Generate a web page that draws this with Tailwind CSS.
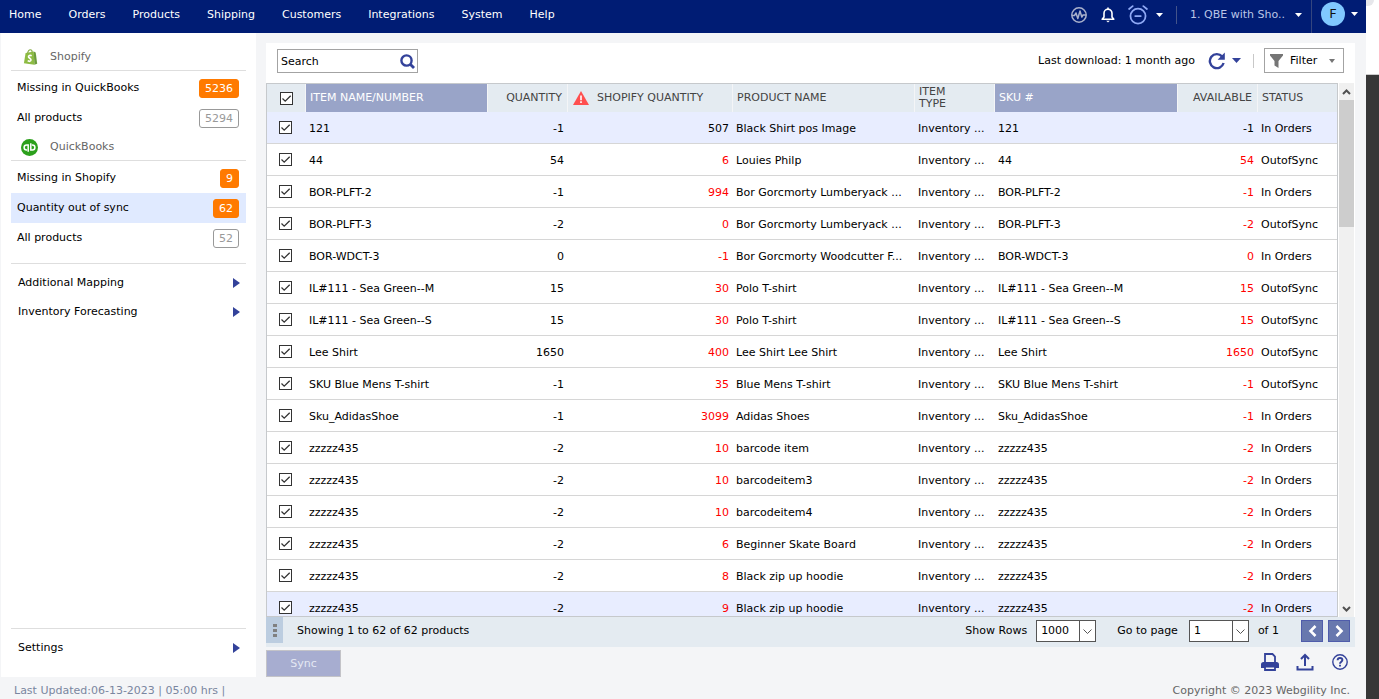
<!DOCTYPE html>
<html lang="en">
  <head>
    <meta charset="UTF-8" />
    <meta name="viewport" content="width=device-width, initial-scale=1.0" />
    <title>Products - Quantity out of sync</title>
    <script src="https://cdn.jsdelivr.net/npm/@tailwindcss/browser@4"></script>
  </head>

  <body class="flex h-screen overflow-hidden bg-[#f4f5f7] font-['Verdana','DejaVu_Sans',sans-serif] text-[11px] leading-4 text-black">
    <div class="flex min-w-0 flex-1 flex-col">
      <!-- top bar -->
      <header class="flex h-[33px] shrink-0 items-center justify-between bg-[#001c74] pl-[9px] pr-2 text-white">
        <nav class="flex gap-[27px] pb-1">
          <a href="#">Home</a>
          <a href="#">Orders</a>
          <a href="#">Products</a>
          <a href="#">Shipping</a>
          <a href="#">Customers</a>
          <a href="#">Integrations</a>
          <a href="#">System</a>
          <a href="#">Help</a>
        </nav>
        <div class="flex h-full items-center">
          <div class="flex items-center pb-[3px]">
            <button aria-label="Activity" class="mr-[14px]">
              <svg class="size-4" viewBox="0 0 16 16" fill="none" stroke="#a9b1cc" stroke-width="1.500" stroke-linejoin="round">
                <circle cx="8" cy="8" r="7.200" />
                <path d="M1 8.500h2.500L5 6l1.800 5.500L9 4l1.800 6L12 8h3" />
              </svg>
            </button>
            <button aria-label="Notifications" class="mr-[13px]">
              <svg class="h-4 w-[14px]" viewBox="0 0 14 16" fill="none" stroke="#fff" stroke-width="1.600" stroke-linejoin="round">
                <path d="M1.200 12.300h11.600L11 10V6.300C11 4 9.500 2.300 7 2.300S3 4 3 6.300V10z" />
                <path d="M7 .4v1.800" />
                <path d="M5.200 13.800h3.600L7 15.600z" fill="#fff" stroke="none" />
              </svg>
            </button>
            <button aria-label="Scheduler" class="mr-2 flex items-center gap-2">
              <svg class="size-5" viewBox="0 0 18 18" fill="none" stroke="#8fa9f5" stroke-width="1.600" stroke-linecap="round">
                <circle cx="9" cy="10" r="6.800" />
                <path d="M6.500 10h5M1 3.600 4.200 1M17 3.600 13.800 1" />
              </svg>
              <svg class="h-1 w-[7px]" viewBox="0 0 7 4" fill="#fff"><path d="M0 0h7L3.500 4z" /></svg>
            </button>
            <span class="ml-[5px] h-[18px] w-px bg-[#44548a]"></span>
            <button class="ml-[13px] flex items-center gap-[10px] text-[#bac5e6]">
              1. QBE with Sho..
              <svg class="h-1 w-[7px]" viewBox="0 0 7 4" fill="#fff"><path d="M0 0h7L3.500 4z" /></svg>
            </button>
          </div>
          <span class="ml-[9px] h-full w-px bg-[#34457f]"></span>
          <button aria-label="Account" class="ml-[9px] flex items-center gap-[6px] pb-[5px]">
            <span class="flex size-6 items-center justify-center rounded-full bg-[#80c8ff] text-[13px] text-[#111]">F</span>
            <svg class="h-1 w-[7px]" viewBox="0 0 7 4" fill="#fff"><path d="M0 0h7L3.500 4z" /></svg>
          </button>
        </div>
      </header>

      <div class="flex min-h-0 flex-1">
        <!-- sidebar -->
        <aside class="ml-px mr-[10px] flex w-[255px] shrink-0 flex-col bg-white px-[10px] pt-2">
          <h2 class="flex h-[30px] items-center gap-3 border-b border-[#dedede] pl-3 pt-[3px] text-[#666]">
            <svg class="h-4 w-[15px]" viewBox="0 0 15 16">
              <path d="M2.600 4 10.800 2.600l.6 13.200L.9 14.200z" fill="#8dbb43" />
              <path d="m10.800 2.600 1.900.8 1.500 11.400-2.800 1z" fill="#6c9c3c" />
              <path d="M4.600 4.200C5 2 6 .8 7.300.8c1.300 0 1.900 1.200 1.900 2.600" fill="none" stroke="#86ad45" stroke-width="1.100" />
              <path d="M8.700 6.700c-1.700-.8-3.400-.1-3.200 1.200.2 1.400 2.600 1.500 2.500 3.100-.1 1.500-2 1.700-3.300.7" fill="none" stroke="#fff" stroke-width="1.600" />
            </svg>
            Shopify
          </h2>
          <ul class="pt-[2px]">
            <li>
              <a href="#" class="flex h-[30px] items-center justify-between pl-[6px] pr-[7px]">
                Missing in QuickBooks
                <span class="rounded-[3px] border border-[#ff7a00] bg-[#ff7a00] px-[5px] leading-[17px] text-white">5236</span>
              </a>
            </li>
            <li>
              <a href="#" class="flex h-[30px] items-center justify-between pl-[6px] pr-[7px]">
                All products
                <span class="rounded-[3px] border border-[#999] px-[5px] leading-[17px] text-[#999]">5294</span>
              </a>
            </li>
          </ul>
          <h2 class="flex h-7 items-center gap-3 border-b border-[#dedede] pl-[10px] pt-px text-[#666]">
            <svg class="size-[17px]" viewBox="0 0 17 17" fill="none" stroke="#fff" stroke-width="1.500">
              <circle cx="8.500" cy="8.500" r="8.500" fill="#2ca01c" stroke="none" />
              <path d="M7.200 12.800V6H5.600a2.500 2.500 0 0 0 0 5h.5" />
              <path d="M9.800 4.200V11h1.600a2.500 2.500 0 0 0 0-5h-.5" />
            </svg>
            QuickBooks
          </h2>
          <ul class="border-b border-[#dedede] pb-[10px] pt-[2px]">
            <li>
              <a href="#" class="flex h-[30px] items-center justify-between pl-[6px] pr-[7px]">
                Missing in Shopify
                <span class="rounded-[3px] border border-[#ff7a00] bg-[#ff7a00] px-[5px] leading-[17px] text-white">9</span>
              </a>
            </li>
            <li>
              <a href="#" class="flex h-[30px] items-center justify-between bg-[#e0eaff] pl-[6px] pr-[7px]">
                Quantity out of sync
                <span class="rounded-[3px] border border-[#ff7a00] bg-[#ff7a00] px-[5px] leading-[17px] text-white">62</span>
              </a>
            </li>
            <li>
              <a href="#" class="flex h-[30px] items-center justify-between pl-[6px] pr-[7px]">
                All products
                <span class="rounded-[3px] border border-[#999] px-[5px] leading-[17px] text-[#999]">52</span>
              </a>
            </li>
          </ul>
          <ul class="pt-1">
            <li>
              <a href="#" class="flex h-[29px] items-center justify-between pl-[7px] pr-[6px]">
                Additional Mapping
                <svg class="h-[10px] w-[7px]" viewBox="0 0 7 10" fill="#33429a"><path d="M0 0v10l7-5z" /></svg>
              </a>
            </li>
            <li>
              <a href="#" class="flex h-[29px] items-center justify-between pl-[7px] pr-[6px]">
                Inventory Forecasting
                <svg class="h-[10px] w-[7px]" viewBox="0 0 7 10" fill="#33429a"><path d="M0 0v10l7-5z" /></svg>
              </a>
            </li>
          </ul>
          <div class="mt-auto h-[49px] border-t border-[#dedede] pt-1">
            <a href="#" class="flex h-[30px] items-center justify-between pl-[7px] pr-[6px]">
              Settings
              <svg class="h-[10px] w-[7px]" viewBox="0 0 7 10" fill="#33429a"><path d="M0 0v10l7-5z" /></svg>
            </a>
          </div>
        </aside>

        <main class="mr-[11px] flex min-w-0 flex-1 flex-col pt-[10px]">
          <!-- search + filter -->
          <div class="flex h-10 shrink-0 items-start justify-between bg-white pl-[11px] pr-[11px] pt-[5px]">
            <form class="mt-px flex h-6 w-[141px] items-center border border-[#a3a3a3] pr-[2px]">
              <input type="text" aria-label="Search" placeholder="Search" class="min-w-0 flex-1 pl-[3px] pt-[2px] outline-none placeholder:text-black" />
              <button type="button" aria-label="Run search">
                <svg class="size-[15px]" viewBox="0 0 15 15" fill="none" stroke="#33429a" stroke-width="2.400">
                  <circle cx="6.500" cy="6.500" r="5.100" />
                  <path d="m10 10 4 4" stroke-width="2.800" />
                </svg>
              </button>
            </form>
            <div class="flex h-[25px] items-center">
              <span class="pt-px">Last download: 1 month ago</span>
              <button aria-label="Refresh" class="ml-[13px] flex items-center gap-[6px]">
                <svg class="size-[18px]" viewBox="0 0 18 18" fill="none" stroke="#33429a" stroke-width="2.400">
                  <path d="M14.200 4.600A7 7 0 1 0 15.600 11" />
                  <path d="M16.800.6v7.200H9.600z" fill="#33429a" stroke="none" />
                </svg>
                <svg class="h-[5px] w-[9px]" viewBox="0 0 9 5" fill="#33429a"><path d="M0 0h9L4.500 5z" /></svg>
              </button>
              <span class="ml-3 mr-[10px] h-[14px] w-px bg-[#c8c8c8]"></span>
              <button class="flex h-[25px] w-20 items-center border border-[#a3a3a3] pl-[5px] pr-2">
                <svg class="mr-[7px] h-[14px] w-[13px]" viewBox="0 0 13 14" fill="#757575"><path d="M0 0h13v1.500L8.500 7v7l-4-2.500V7L0 1.500z" /></svg>
                Filter
                <svg class="ml-auto h-1 w-[6px]" viewBox="0 0 6 4" fill="#757575"><path d="M0 0h6L3 4z" /></svg>
              </button>
            </div>
          </div>

          <!-- product grid -->
          <div class="flex min-h-0 flex-1 bg-white">
            <div class="mr-px min-w-0 flex-1 overflow-hidden border border-[#c6c9cc]">
              <table class="w-full table-fixed border-separate border-spacing-0">
                <colgroup>
                  <col class="w-[39px]" />
                  <col class="w-[182px]" />
                  <col class="w-20" />
                  <col class="w-[165px]" />
                  <col class="w-[182px]" />
                  <col class="w-20" />
                  <col class="w-[183px]" />
                  <col class="w-20" />
                  <col class="w-[79px]" />
                </colgroup>
                <thead>
                  <tr class="h-7 bg-[#e4ebf1] text-left leading-3 text-[#444]">
                    <th class="border-r border-[#f4f5f7] pl-[13px]">
                      <span class="grid size-[13px]">
                        <input type="checkbox" checked aria-label="Select all products" class="col-start-1 row-start-1 size-[13px] appearance-none border border-[#333] bg-white" />
                        <svg class="pointer-events-none col-start-1 row-start-1 size-[13px]" viewBox="0 0 13 13" fill="none" stroke="#333" stroke-width="1.300"><path d="m2.500 6.500 2.700 2.700 5.500-5.500" /></svg>
                      </span>
                    </th>
                    <th class="border-r border-[#f4f5f7] bg-[#99a4c8] pl-1 font-normal text-white">ITEM NAME/NUMBER</th>
                    <th class="border-r border-[#f4f5f7] pr-[5px] text-right font-normal">QUANTITY</th>
                    <th class="border-r border-[#f4f5f7] pl-[5px] font-normal">
                      <span class="flex items-center gap-2">
                        <svg class="h-[14px] w-4" viewBox="0 0 16 14">
                          <path d="m8 0 8 14H0z" fill="#ff4f4f" />
                          <path d="M8 4.500v4.700M8 10.300V12" stroke="#fff" stroke-width="1.600" />
                        </svg>
                        SHOPIFY QUANTITY
                      </span>
                    </th>
                    <th class="border-r border-[#f4f5f7] pl-1 font-normal">PRODUCT NAME</th>
                    <th class="border-r border-[#f4f5f7] pl-1 pr-8 font-normal">ITEM TYPE</th>
                    <th class="border-r border-[#f4f5f7] bg-[#99a4c8] pl-1 font-normal text-white">SKU #</th>
                    <th class="border-r border-[#f4f5f7] pr-[5px] text-right font-normal">AVAILABLE</th>
                    <th class="pl-1 font-normal">STATUS</th>
                  </tr>
                </thead>
                <tbody id="products"></tbody>
              </table>
            </div>
            <!-- scrollbar -->
            <div class="mr-px flex w-[15px] flex-col items-center bg-[#f0f0f0]">
              <svg class="h-[17px] w-[9px] shrink-0" viewBox="0 0 9 17" fill="none" stroke="#505050" stroke-width="2"><path d="m1 11 3.500-3.500L8 11" /></svg>
              <div class="h-[127px] w-full bg-[#cdcdcd]"></div>
              <svg class="mt-auto h-[17px] w-[9px] shrink-0" viewBox="0 0 9 17" fill="none" stroke="#505050" stroke-width="2"><path d="m1 7 3.500 3.500L8 7" /></svg>
            </div>
          </div>

          <!-- pager -->
          <div class="flex h-[30px] shrink-0 items-start justify-between bg-[#e4ebf1] pr-[5px]">
            <div class="flex items-center">
              <button aria-label="More" class="mr-[14px] flex h-[26px] w-[17px] items-center justify-center bg-[#bccde0]">
                <svg class="h-[13px] w-1" viewBox="0 0 4 13" fill="#808080"><path d="M0 0h4v3H0zM0 5h4v3H0zM0 10h4v3H0z" /></svg>
              </button>
              <span class="pt-[2px]">Showing 1 to 62 of 62 products</span>
            </div>
            <div class="flex items-center pt-[3px]">
              <label for="rows" class="mr-[9px]">Show Rows</label>
              <span class="relative mr-[21px]">
                <select id="rows" class="block h-[22px] w-[60px] appearance-none border border-[#555] bg-white pl-1 text-[11px] leading-4">
                  <option>1000</option>
                </select>
                <svg class="pointer-events-none absolute right-0 top-0 h-[22px] w-[17px]" viewBox="0 0 17 22" fill="none" stroke="#555"><path d="M.5 0v22M4.500 9.500 8.500 13.500 12.500 9.500" /></svg>
              </span>
              <label for="page" class="mr-[11px]">Go to page</label>
              <span class="relative mr-[9px]">
                <select id="page" class="block h-[22px] w-[60px] appearance-none border border-[#555] bg-white pl-1 text-[11px] leading-4">
                  <option>1</option>
                </select>
                <svg class="pointer-events-none absolute right-0 top-0 h-[22px] w-[17px]" viewBox="0 0 17 22" fill="none" stroke="#555"><path d="M.5 0v22M4.500 9.500 8.500 13.500 12.500 9.500" /></svg>
              </span>
              <span class="mr-[22px]">of 1</span>
              <button aria-label="Previous page" class="mr-[5px] flex size-[22px] items-center justify-center border border-[#4f5cab] bg-[#6878ae]">
                <svg class="h-3 w-[9px]" viewBox="0 0 9 12" fill="none" stroke="#fff" stroke-width="2.600"><path d="M7.500 1 2.500 6l5 5" /></svg>
              </button>
              <button aria-label="Next page" class="flex size-[22px] items-center justify-center border border-[#4f5cab] bg-[#6878ae]">
                <svg class="h-3 w-[9px]" viewBox="0 0 9 12" fill="none" stroke="#fff" stroke-width="2.600"><path d="m1.500 1 5 5-5 5" /></svg>
              </button>
            </div>
          </div>

          <!-- actions -->
          <div class="flex h-[30px] shrink-0 items-center justify-between pr-[6px]">
            <button disabled class="mt-[3px] h-[27px] w-[75px] border border-[#c3c3c8] bg-[#a7add0] text-[#e4e8f3]">Sync</button>
            <div class="flex gap-[17px]">
              <button aria-label="Print">
                <svg class="size-[18px]" viewBox="0 0 18 18" fill="none" stroke="#33429a" stroke-width="1.800">
                  <path d="M4 9V1h7.500L14 3.500V9" />
                  <path d="M2.500 9h13A2.500 2.500 0 0 1 18 11.500V15H0v-3.500A2.500 2.500 0 0 1 2.500 9z" fill="#33429a" stroke="none" />
                  <path d="M4 13.500h10V17H4z" fill="#f4f5f7" />
                </svg>
              </button>
              <button aria-label="Export">
                <svg class="size-[18px]" viewBox="0 0 18 18" fill="none" stroke="#33429a" stroke-width="2">
                  <path d="M9 13V2.500M5 6l4-4 4 4M1.500 13v3.500h15V13" />
                </svg>
              </button>
              <button aria-label="Help">
                <svg class="size-[18px]" viewBox="0 0 18 18" fill="none" stroke="#33429a" stroke-width="1.400">
                  <circle cx="9" cy="9" r="7.200" />
                  <path d="M6.600 7.300C6.700 5.700 7.700 5 9 5s2.400.8 2.400 2.100C11.400 8.700 9 8.700 9 10.700M9 11.700v1.800" stroke-width="1.900" />
                </svg>
              </button>
            </div>
          </div>
        </main>
      </div>

      <footer class="flex h-[22px] shrink-0 items-center justify-between pl-[14px] pr-4 pt-[5px]">
        <span class="text-[#7a86a0]">Last Updated:06-13-2023 | 05:00 hrs |</span>
        <span class="text-[#666]">Copyright © 2023 Webgility Inc.</span>
      </footer>
    </div>

    <!-- edge of the page behind -->
    <div class="flex w-[13px] shrink-0 flex-col bg-[#373737]">
      <div class="h-[75px] border-b border-[#ccc] bg-white">
        <div class="h-[6px] w-2 rounded-br-[6px] bg-[#e6e7eb]"></div>
      </div>
    </div>

    <script>
      // name, quantity, shopify quantity, product, available, status
      const products = [
        ["121", -1, 507, "Black Shirt pos Image", -1, "In Orders"],
        ["44", 54, 6, "Louies Philp", 54, "OutofSync"],
        ["BOR-PLFT-2", -1, 994, "Bor Gorcmorty Lumberyack ...", -1, "In Orders"],
        ["BOR-PLFT-3", -2, 0, "Bor Gorcmorty Lumberyack ...", -2, "OutofSync"],
        ["BOR-WDCT-3", 0, -1, "Bor Gorcmorty Woodcutter F...", 0, "In Orders"],
        ["IL#111 - Sea Green--M", 15, 30, "Polo T-shirt", 15, "OutofSync"],
        ["IL#111 - Sea Green--S", 15, 30, "Polo T-shirt", 15, "OutofSync"],
        ["Lee Shirt", 1650, 400, "Lee Shirt Lee Shirt", 1650, "OutofSync"],
        ["SKU Blue Mens T-shirt", -1, 35, "Blue Mens T-shirt", -1, "OutofSync"],
        ["Sku_AdidasShoe", -1, 3099, "Adidas Shoes", -1, "In Orders"],
        ["zzzzz435", -2, 10, "barcode item", -2, "In Orders"],
        ["zzzzz435", -2, 10, "barcodeitem3", -2, "In Orders"],
        ["zzzzz435", -2, 10, "barcodeitem4", -2, "In Orders"],
        ["zzzzz435", -2, 6, "Beginner Skate Board", -2, "In Orders"],
        ["zzzzz435", -2, 8, "Black zip up hoodie", -2, "In Orders"],
        ["zzzzz435", -2, 9, "Black zip up hoodie", -2, "In Orders"],
      ];

      document.getElementById("products").innerHTML = products
        .map(([name, qty, shopifyQty, product, available, status], i) => {
          const rowColor = i === 0 || i === 15 ? "bg-[#e8edff]" : "bg-white";
          const qtyColor = i === 0 ? "text-black" : "text-[#f00]";
          return `
            <tr class="h-8 whitespace-nowrap *:border-b *:border-[#d6d6d6] ${rowColor}">
              <td class="pl-3">
                <span class="grid size-[13px]">
                  <input type="checkbox" checked aria-label="Select ${name}" class="col-start-1 row-start-1 size-[13px] appearance-none border border-[#333] bg-white" />
                  <svg class="pointer-events-none col-start-1 row-start-1 size-[13px]" viewBox="0 0 13 13" fill="none" stroke="#333" stroke-width="1.300"><path d="m2.500 6.500 2.700 2.700 5.500-5.500" /></svg>
                </span>
              </td>
              <td class="pl-[3px] pt-[3px]">${name}</td>
              <td class="pr-1 pt-[3px] text-right">${qty}</td>
              <td class="pr-1 pt-[3px] text-right ${qtyColor}">${shopifyQty}</td>
              <td class="pl-[3px] pt-[3px]">${product}</td>
              <td class="pl-[3px] pt-[3px]">Inventory ...</td>
              <td class="pl-[3px] pt-[3px]">${name}</td>
              <td class="pr-1 pt-[3px] text-right ${qtyColor}">${available}</td>
              <td class="pl-[3px] pt-[3px]">${status}</td>
            </tr>`;
        })
        .join("");
    </script>
  </body>
</html>
